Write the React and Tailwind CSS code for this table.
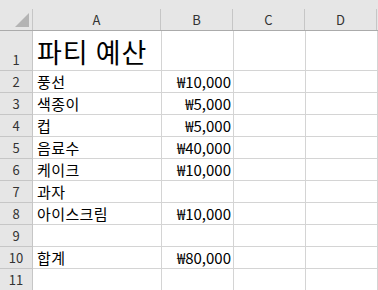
const COLS = ['A', 'B', 'C', 'D'];

const ROWS = [
  { n: 1, a: '파티 예산', b: '', title: true },
  { n: 2, a: '풍선', b: '₩10,000' },
  { n: 3, a: '색종이', b: '₩5,000' },
  { n: 4, a: '컵', b: '₩5,000' },
  { n: 5, a: '음료수', b: '₩40,000' },
  { n: 6, a: '케이크', b: '₩10,000' },
  { n: 7, a: '과자', b: '' },
  { n: 8, a: '아이스크림', b: '₩10,000' },
  { n: 9, a: '', b: '' },
  { n: 10, a: '합계', b: '₩80,000' },
  { n: 11, a: '', b: '' },
];

const App = () => {
  return (
    <div
      className="w-[378px] h-[290px] overflow-hidden bg-white text-black"
      style={{ fontFamily: '"Noto Sans CJK KR", "Noto Sans", sans-serif' }}
    >
      {/* Column headers */}
      <div className="flex h-[31px] bg-[#e6e6e6] border-b border-[#ababab]">
        <div className="w-[33px] h-full relative">
          <div className="absolute left-[15px] top-[13px] w-0 h-0 border-l-[14px] border-l-transparent border-b-[14px] border-b-[#b4b4b4]" />
        </div>
        <div className="flex flex-1 items-end">
          {COLS.map((c, i) => (
            <div
              key={c}
              className={`${i === 0 ? 'w-[129px] border-l -ml-px' : 'w-[72px]'} h-[21px] border-r border-[#c6c6c6] flex items-center justify-center text-[13px] text-[#333]`}
            >
              {c}
            </div>
          ))}
        </div>
      </div>

      {/* Rows */}
      {ROWS.map((r) => (
        <div key={r.n} className={`flex ${r.title ? 'h-[40px]' : 'h-[22px]'}`}>
          <div className="w-[33px] shrink-0 bg-[#e6e6e6] border-r border-b border-[#c6c6c6] flex items-end justify-center pb-[1px] text-[13px] leading-[18px] text-[#333]">
            {r.n}
          </div>
          <div
            className={`w-[129px] shrink-0 border-r border-b border-[#d4d4d4] flex items-end pl-[4px] whitespace-nowrap ${
              r.title ? 'text-[27px] leading-[36px] tracking-[1px]' : 'text-[15px] leading-[20px] tracking-[0.4px]'
            }`}
          >
            {r.a}
          </div>
          <div className="w-[72px] shrink-0 border-r border-b border-[#d4d4d4] flex items-end justify-end pr-[2px] text-[15px] leading-[20px] whitespace-nowrap">
            {r.b}
          </div>
          <div className="w-[72px] shrink-0 border-r border-b border-[#d4d4d4]" />
          <div className="w-[72px] shrink-0 border-r border-b border-[#d4d4d4]" />
        </div>
      ))}
    </div>
  );
};

export default App;
